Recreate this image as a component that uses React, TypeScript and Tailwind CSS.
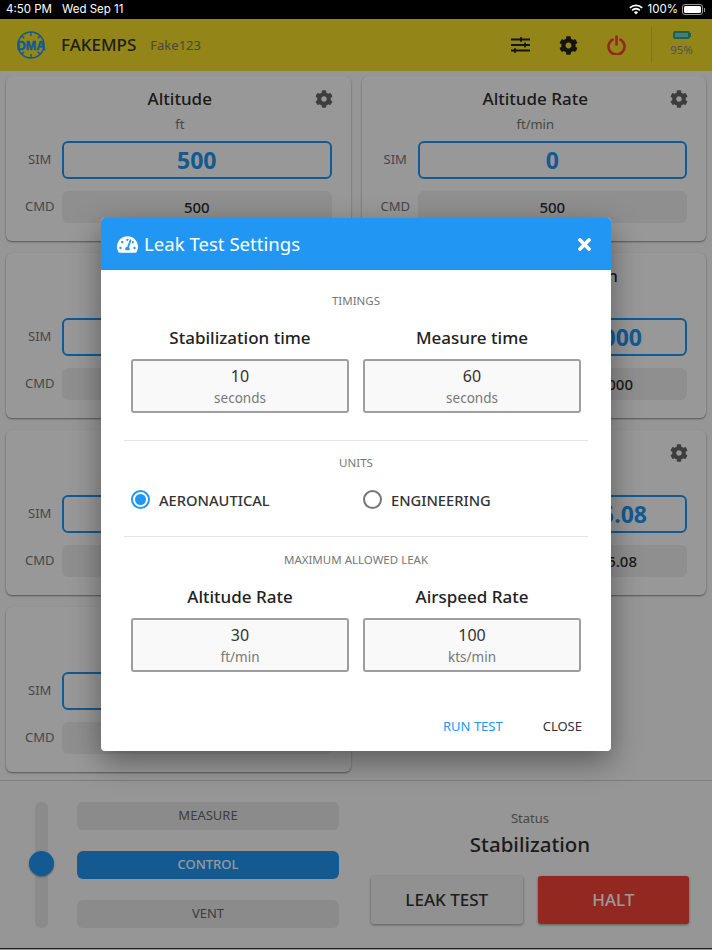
import { FaCog, FaTachometerAlt, FaTimes } from "react-icons/fa";

type CardProps = {
  title?: string;
  unit?: string;
  sim?: string;
  cmd?: string;
  gear?: boolean;
  simAlign?: string;
  cmdAlign?: string;
};

function SensorCard({ title, unit, sim, cmd, gear, simAlign = "justify-center", cmdAlign = "justify-center" }: CardProps) {
  return (
    <div className="relative h-[165px] rounded-md bg-[#fdfdfd] pl-[22px] pr-[19px] pt-[11px] shadow-[0_1px_2px_rgba(0,0,0,0.45)]">
      <div className="h-6 text-center text-[17px] leading-6 font-medium text-[#2e2e2e]">{title}</div>
      <div className="mt-[3px] h-5 text-center text-[13px] leading-5 text-[#777]">{unit}</div>
      {gear && <FaCog className="absolute right-[18px] top-[14px] text-[18px] text-[#666]" />}
      <div className="mt-[7px] flex items-center">
        <span className="w-[34px] shrink-0 text-[13px] text-[#777]">SIM</span>
        <div className={`flex h-[38px] flex-1 items-center rounded-md border-2 border-[#2196f3] text-[23px] font-bold text-[#2196f3] ${simAlign}`}>
          {sim}
        </div>
      </div>
      <div className="mt-3 flex items-center">
        <span className="-ml-[3px] mr-[3px] w-[34px] shrink-0 text-[13px] text-[#777]">CMD</span>
        <div className={`flex h-[32px] flex-1 items-center rounded-md bg-[#eeeeee] text-[15px] font-medium text-[#2e2e2e] ${cmdAlign}`}>
          {cmd}
        </div>
      </div>
    </div>
  );
}

function SettingBox({ label, value, unit }: { label: string; value: string; unit: string }) {
  return (
    <div className="flex w-[218px] flex-col items-center">
      <div className="mb-[8px] h-[26px] text-[17px] leading-[26px] font-medium text-[#222]">{label}</div>
      <div className="flex h-[54px] w-full flex-col items-center rounded-[3px] border-2 border-[#9e9e9e] bg-[#f9f9f9] pt-[3px]">
        <span className="text-[16px] leading-[24px] text-[#333]">{value}</span>
        <span className="text-[13.5px] leading-[20px] text-[#777]">{unit}</span>
      </div>
    </div>
  );
}

function Radio({ label, on, className }: { label: string; on?: boolean; className: string }) {
  return (
    <div className={`flex items-center ${className}`}>
      <div className={`flex h-[19px] w-[19px] items-center justify-center rounded-full border-2 ${on ? "border-[#2196f3]" : "border-[#757575]"}`}>
        {on && <div className="h-[11px] w-[11px] rounded-full bg-[#2196f3]" />}
      </div>
      <span className="ml-[9px] mt-[2px] text-[14.7px] leading-[20px] font-medium text-[#333]">{label}</span>
    </div>
  );
}

function ModeButton({ label, active }: { label: string; active?: boolean }) {
  return (
    <div className={`flex h-[28px] items-center justify-center rounded-md text-[13px] ${active ? "bg-[#2196f3] font-medium text-white" : "bg-[#e8e8e8] text-[#666]"}`}>
      {label}
    </div>
  );
}

function DmaLogo() {
  return (
    <svg width="34" height="32" viewBox="0 0 34 32" className="shrink-0">
      <circle cx="17" cy="16" r="13" fill="none" stroke="#2196f3" strokeWidth="1.6" />
      <path d="M17 3v4M17 25v4M7.8 6.8l2.4 2.4M26.2 6.8l-2.4 2.4M7.8 25.2l2.4-2.4M26.2 25.2l-2.4-2.4" stroke="#2196f3" strokeWidth="1.4" />
      <text x="17" y="20.5" textAnchor="middle" fontSize="12.5" fontWeight="900" fill="#2196f3" fontFamily="Liberation Sans, sans-serif" stroke="#2196f3" strokeWidth="0.5">DMA</text>
    </svg>
  );
}

export default function App() {
  return (
    <div className="relative flex h-[950px] w-[712px] flex-col overflow-hidden bg-[#fbfbfb] font-['Noto_Sans',sans-serif]">
      {/* status bar */}
      <div className="relative z-20 flex h-[19px] shrink-0 items-center bg-black pl-[6px] pr-[7px] font-['Inter',sans-serif] text-[11.5px] text-white">
        <span>4:50 PM</span>
        <span className="ml-[10px]">Wed Sep 11</span>
        <svg width="14" height="11" viewBox="0 0 14 11" className="ml-auto mr-[5px]">
          <path d="M7 10.5 4.9 8.2a3 3 0 0 1 4.2 0zM3.7 7 2.5 5.7a6.4 6.4 0 0 1 9 0L10.3 7a4.7 4.7 0 0 0-6.6 0zM1.4 4.6.2 3.3a9.7 9.7 0 0 1 13.6 0l-1.2 1.3a8 8 0 0 0-11.2 0z" fill="#fff" />
        </svg>
        <span>100%</span>
        <div className="ml-[4px] flex items-center">
          <div className="h-[11px] w-[21px] rounded-[3px] border border-[#999] p-[1px]">
            <div className="h-full w-full rounded-[1.5px] bg-white" />
          </div>
          <div className="ml-[1px] h-[4px] w-[1px] bg-[#999]" />
        </div>
      </div>

      {/* top bar */}
      <div className="flex h-[52px] shrink-0 items-center bg-[#f5de27] pl-[14px] pr-[18px]">
        <DmaLogo />
        <span className="ml-[13px] text-[17px] font-medium text-[#333]">FAKEMPS</span>
        <span className="ml-[14px] mt-[2px] text-[13px] text-[#777]">Fake123</span>
        <svg width="19" height="16" viewBox="0 0 19 16" className="ml-auto text-[#222]" fill="currentColor">
          <rect x="0" y="1.5" width="19" height="2" />
          <rect x="0" y="7" width="19" height="2" />
          <rect x="0" y="12.5" width="19" height="2" />
          <rect x="9" y="0" width="2" height="5" rx="1" />
          <rect x="13" y="5.5" width="2" height="5" rx="1" />
          <rect x="3" y="11" width="2" height="5" rx="1" />
        </svg>
        <FaCog className="ml-[29px] text-[19px] text-[#222]" />
        <svg width="19" height="20" viewBox="0 0 19 20" fill="none" stroke="#f44336" strokeWidth="2.6" strokeLinecap="round" className="ml-[29px]">
          <path d="M5.6 4.6a8 8 0 1 0 7.8 0" />
          <path d="M9.5 1.5v8" />
        </svg>
        <div className="ml-[25px] flex h-[36px] w-[43px] flex-col items-center border-l border-[#d8c423] pl-[17px]">
          <div className="mt-[4px] flex items-center">
            <div className="h-[8px] w-[17px] rounded-[2px] border-2 border-[#26a69a] bg-[#80cbc4]" />
            <div className="h-[4px] w-[1px] bg-[#26a69a]" />
          </div>
          <span className="mt-[3px] text-[11.5px] leading-[16px] text-[#888]">95%</span>
        </div>
      </div>

      {/* sensor grid */}
      <div className="grid h-[710px] shrink-0 grid-cols-2 content-start gap-x-[11px] gap-y-[12px] border-b border-[#d4d4d4] px-[6px] pt-[5px]">
        <SensorCard title="Altitude" unit="ft" sim="500" cmd="500" gear />
        <SensorCard title="Altitude Rate" unit="ft/min" sim="0" cmd="500" gear />
        <SensorCard title="Airspeed" unit="kts" />
        <SensorCard title="Airspeed Calibration" sim="1000" cmd="1000" simAlign="justify-end pr-[43px]" cmdAlign="justify-end pr-[54px]" />
        <SensorCard sim=" " />
        <SensorCard gear sim="15.08" cmd="15.08" simAlign="justify-end pr-[38px]" cmdAlign="justify-end pr-[50px]" />
        <SensorCard sim=" " />
      </div>

      {/* bottom controls */}
      <div className="flex h-[168px] shrink-0 border-b border-[#333] pl-[35px] pr-[23px] pt-[21px]">
        <div className="relative h-[126px] w-[13px] rounded-md bg-[#e8e8e8]">
          <div className="absolute -left-[6px] top-[49px] h-[25px] w-[25px] rounded-full bg-[#2196f3] shadow-[0_1px_2px_rgba(0,0,0,0.4)]" />
        </div>
        <div className="ml-[29px] flex h-[126px] w-[262px] flex-col justify-between">
          <ModeButton label="MEASURE" />
          <ModeButton label="CONTROL" active />
          <ModeButton label="VENT" />
        </div>
        <div className="ml-[32px] flex flex-1 flex-col items-center">
          <span className="mt-[6px] text-[13px] leading-[20px] text-[#777]">Status</span>
          <span className="text-[20.5px] leading-[32px] font-medium text-[#2e2e2e]">Stabilization</span>
          <div className="mt-[16px] flex w-full gap-[15px]">
            <div className="flex h-[48px] flex-1 items-center justify-center rounded-[3px] bg-[#f2f2f2] text-[17px] font-medium text-[#333] shadow-[0_1px_3px_rgba(0,0,0,0.4)]">LEAK TEST</div>
            <div className="flex h-[48px] flex-1 items-center justify-center rounded-[3px] bg-[#f44336] text-[17px] font-medium text-white shadow-[0_1px_3px_rgba(0,0,0,0.4)]">HALT</div>
          </div>
        </div>
      </div>

      {/* dialog overlay */}
      <div className="absolute inset-0 z-10 bg-black/40" />
      <div className="absolute left-[101px] top-[218px] z-10 flex h-[533px] w-[510px] flex-col overflow-hidden rounded-[4px] bg-white shadow-[0_10px_30px_rgba(0,0,0,0.4)]">
        <div className="flex h-[52px] shrink-0 items-center bg-[#2196f3] pl-[16px] pr-[17px] text-white">
          <FaTachometerAlt className="text-[21px]" />
          <span className="ml-[6px] text-[18.6px]">Leak Test Settings</span>
          <FaTimes className="ml-auto text-[19px]" />
        </div>
        <div className="flex flex-1 flex-col px-[22px]">
          <div className="mt-[22px] text-center text-[11.5px] leading-[18px] text-[#777]">TIMINGS</div>
          <div className="mt-[15px] flex justify-between px-[8px]">
            <SettingBox label="Stabilization time" value="10" unit="seconds" />
            <SettingBox label="Measure time" value="60" unit="seconds" />
          </div>
          <div className="mx-[1px] mt-[27px] h-[1px] bg-[#e4e4e4]" />
          <div className="mt-[13px] text-center text-[11.5px] leading-[18px] text-[#777]">UNITS</div>
          <div className="mt-[17px] flex h-[20px] px-[8px]">
            <Radio label="AERONAUTICAL" on className="w-[232px]" />
            <Radio label="ENGINEERING" className="" />
          </div>
          <div className="mx-[1px] mt-[27px] h-[1px] bg-[#e4e4e4]" />
          <div className="mt-[14px] text-center text-[11.5px] leading-[18px] text-[#777]">MAXIMUM ALLOWED LEAK</div>
          <div className="mt-[15px] flex justify-between px-[8px]">
            <SettingBox label="Altitude Rate" value="30" unit="ft/min" />
            <SettingBox label="Airspeed Rate" value="100" unit="kts/min" />
          </div>
          <div className="mt-[44px] flex justify-end gap-[40px] pr-[7px] text-[13px] leading-[20px]">
            <span className="text-[#2196f3]">RUN TEST</span>
            <span className="text-[#333]">CLOSE</span>
          </div>
        </div>
      </div>
    </div>
  );
}
